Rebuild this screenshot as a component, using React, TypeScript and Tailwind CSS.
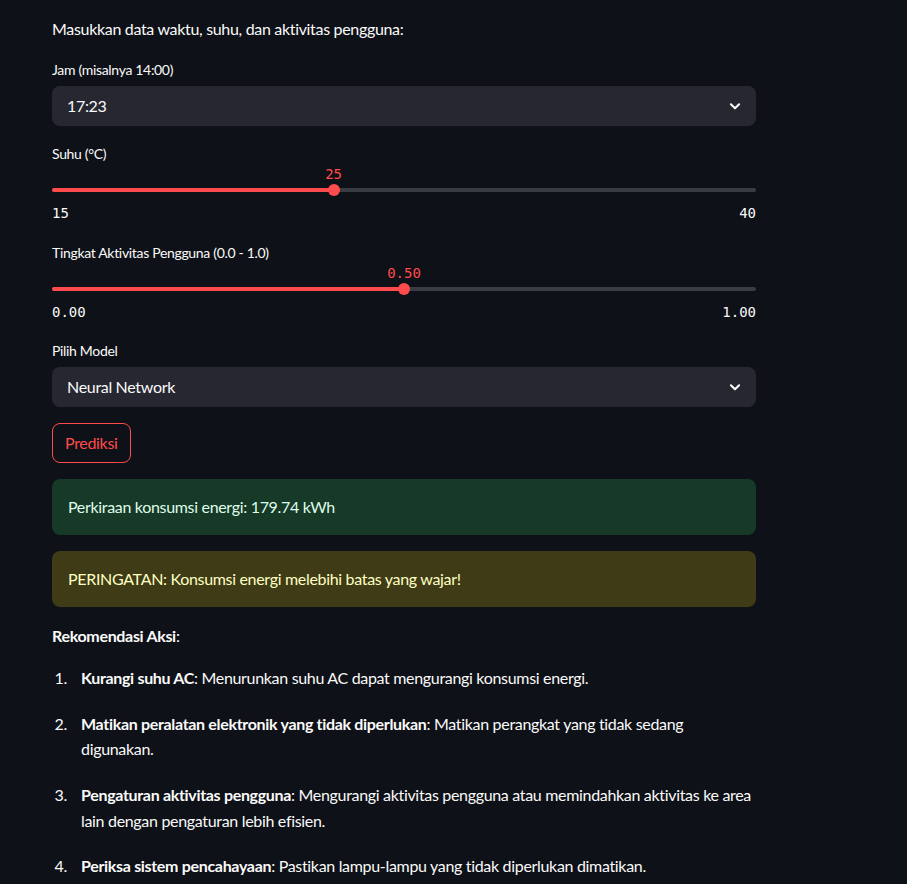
import React from 'react';

const sans = "font-['Lato','Noto_Sans',sans-serif] tracking-[-0.02em]";
const mono = "font-['DejaVu_Sans_Mono','Liberation_Mono',monospace] tracking-normal";

function Chevron() {
  return (
    <svg width="14" height="14" viewBox="0 0 24 24" fill="none" stroke="#fafafa" strokeWidth="3.5" strokeLinecap="round" strokeLinejoin="round">
      <path d="M5 9l7 7 7-7" />
    </svg>
  );
}

function SelectBox({ label, value }: { label: string; value: string }) {
  return (
    <div>
      <div className="h-6 text-sm leading-6 mb-1">{label}</div>
      <div className="h-10 rounded-lg bg-[#262730] flex items-center justify-between pl-[15px] pr-[14px]">
        <span className="text-base">{value}</span>
        <Chevron />
      </div>
    </div>
  );
}

interface SliderProps {
  label: string;
  value: number;
  min: number;
  max: number;
  fmt: (n: number) => string;
  tight?: boolean;
}

function Slider({ label, value, min, max, fmt, tight }: SliderProps) {
  const pct = ((value - min) / (max - min)) * 100;
  return (
    <div className={tight ? 'pb-[3px]' : 'pb-1'}>
      <div className="h-6 text-sm leading-6">{label}</div>
      <div className={`relative h-4 text-sm leading-4 text-[#ff4b4b] ${mono}`}>
        <span className="absolute -translate-x-1/2" style={{ left: `${pct}%` }}>
          {fmt(value)}
        </span>
      </div>
      <div className="relative mt-[6px] h-1 rounded-full bg-[#3a3c44]">
        <div className="h-1 rounded-full bg-[#ff4b4b]" style={{ width: `${pct}%` }} />
        <div
          className="absolute top-1/2 h-3 w-3 -translate-x-1/2 -translate-y-1/2 rounded-full bg-[#ff4b4b]"
          style={{ left: `${pct}%` }}
        />
      </div>
      <div className={`mt-[13px] flex justify-between text-sm leading-4 ${mono}`}>
        <span>{fmt(min)}</span>
        <span>{fmt(max)}</span>
      </div>
    </div>
  );
}

const items = [
  { b: 'Kurangi suhu AC', t: ['Menurunkan suhu AC dapat mengurangi konsumsi energi.'] },
  { b: 'Matikan peralatan elektronik yang tidak diperlukan', t: ['Matikan perangkat yang tidak sedang', 'digunakan.'] },
  { b: 'Pengaturan aktivitas pengguna', t: ['Mengurangi aktivitas pengguna atau memindahkan aktivitas ke area', 'lain dengan pengaturan lebih efisien.'] },
  { b: 'Periksa sistem pencahayaan', t: ['Pastikan lampu-lampu yang tidak diperlukan dimatikan.'] },
];

export default function App() {
  return (
    <div className={`min-h-screen bg-[#0e1117] text-[#fafafa] ${sans}`}>
      <div className="w-[704px] ml-[52px] pt-4 flex flex-col gap-4">
        <p className="text-base leading-[25.6px]">Masukkan data waktu, suhu, dan aktivitas pengguna:</p>

        <SelectBox label="Jam (misalnya 14:00)" value="17:23" />

        <Slider label="Suhu (°C)" value={25} min={15} max={40} fmt={(n) => String(n)} />

        <Slider label="Tingkat Aktivitas Pengguna (0.0 - 1.0)" value={0.5} min={0} max={1} fmt={(n) => n.toFixed(2)} tight />

        <SelectBox label="Pilih Model" value="Neural Network" />

        <div>
          <button className="h-10 rounded-lg border border-[#ff4b4b] px-3 text-base text-[#ff4b4b]">Prediksi</button>
        </div>

        <div className="h-14 rounded-lg bg-[#173928] px-4 flex items-center text-base text-[#dffde9]">
          Perkiraan konsumsi energi: 179.74 kWh
        </div>

        <div className="h-14 rounded-lg bg-[#3e3b16] px-4 flex items-center text-base text-[#ffffc2]">
          PERINGATAN: Konsumsi energi melebihi batas yang wajar!
        </div>

        <div className="text-base leading-[25.6px]">
          <p>
            <strong className="font-bold">Rekomendasi Aksi</strong>:
          </p>
          <ol className="mt-[17px] flex flex-col gap-5">
            {items.map((it, i) => (
              <li key={i} className="flex">
                <span className="w-[29px] shrink-0 pr-[14px] text-right">{i + 1}.</span>
                <span className="whitespace-nowrap">
                  <strong className="font-bold">{it.b}</strong>: {it.t[0]}
                  {it.t[1] && (
                    <>
                      <br />
                      {it.t[1]}
                    </>
                  )}
                </span>
              </li>
            ))}
          </ol>
        </div>
      </div>
    </div>
  );
}
